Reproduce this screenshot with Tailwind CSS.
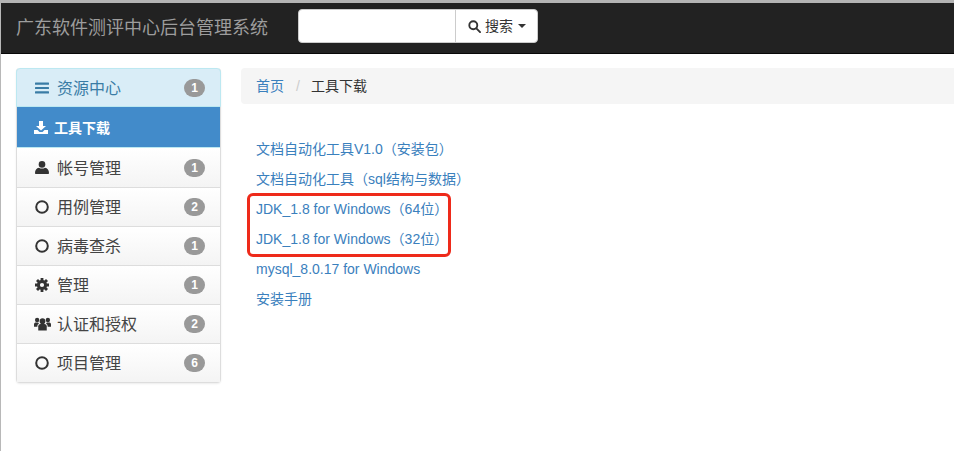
<!DOCTYPE html>
<html lang="zh-CN">

<head>
    <meta charset="UTF-8">
    <title>广东软件测评中心后台管理系统</title>
    <script src="https://cdn.jsdelivr.net/npm/@tailwindcss/browser@4"></script>
</head>

<body class="bg-white h-[451px] w-[954px] overflow-hidden font-['Liberation_Sans','Noto_Sans_CJK_SC',sans-serif] text-[14px] text-[#333]">
    <div class="h-full border-l border-[#b8b8b8]">
        <div class="h-[3px] -ml-px bg-[#b4b4b4]"></div>

        <!-- Navbar -->
        <nav class="h-[51px] bg-[#222] border-b border-[#080808] flex items-center">
            <span class="ml-[15px] text-[18px] leading-none text-[#9d9d9d]">广东软件测评中心后台管理系统</span>
            <div class="ml-[30px] mb-[4px] flex h-[34px] w-[240px] bg-white rounded-[4px] border border-[#ccc]">
                <div class="w-[157px] border-r border-[#ccc]"></div>
                <div class="flex-1 flex items-center pl-[12px] gap-[4px] text-[#333]">
                    <svg class="w-[13px] h-[13px]" viewBox="0 0 14 14" fill="none" stroke="#333" stroke-width="2"><circle cx="5.7" cy="5.7" r="4.3"/><path d="M9 9l4 4" stroke-linecap="round"/></svg>
                    <span>搜索</span>
                    <span class="ml-[1px] w-0 h-0 border-x-4 border-x-transparent border-t-4 border-t-[#333]"></span>
                </div>
            </div>
        </nav>

        <div class="flex pt-[14px] pl-[15px]">
            <!-- Sidebar -->
            <aside class="w-[205px] shrink-0 border-x border-b border-[#ddd] rounded-[4px] shadow-[0_1px_2px_rgba(0,0,0,0.08)]">
                <div class="h-[39px] flex items-center pt-[2px] pl-[18px] pr-[15px] bg-[#d9edf7] border border-[#bce8f1] -mx-px rounded-t-[4px] text-[#3a7ca5] text-[16px]">
                    <svg class="w-[14px] h-[12px] mr-[8px] -mt-[2px]" viewBox="0 0 14 12" fill="#3a7ca5"><rect y="0.5" width="14" height="2.2" rx=".5"/><rect y="4.9" width="14" height="2.2" rx=".5"/><rect y="9.3" width="14" height="2.2" rx=".5"/></svg>
                    <span class="flex-1">资源中心</span>
                    <span class="w-[21px] h-[18px] -mt-[2px] rounded-full bg-[#999] text-white text-[12px] font-bold flex items-center justify-center">1</span>
                </div>
                <div class="h-[41px] flex items-center pt-[2px] pl-[17px] bg-[#428bca] border-b border-[#bce8f1] text-white font-bold text-[14px]">
                    <svg class="w-[14px] h-[13px] mr-[6px] -mt-[2px]" viewBox="0 0 14 13" fill="#fff"><path d="M5 0h4v5h3L7 9.5 2 5h3zM0 9h3.5l2 2h3l2-2H14v4H0z"/></svg>
                    <span>工具下载</span>
                </div>

                <div class="h-[40px] flex items-center pl-[18px] pr-[15px] border-b border-[#ddd] bg-linear-to-b from-white to-[#f4f4f4] text-[16px] text-[#444]">
                    <svg class="w-[14px] h-[13px] mr-[8px]" viewBox="0 0 14 13" fill="#333"><circle cx="7" cy="3.4" r="3.3"/><path d="M1 13c-.6 0-1-.4-1-1 0-3 1.500-5 4-5.300 1.800 1.200 4.200 1.200 6 0 2.500.3 4 2.300 4 5.300 0 .6-.4 1-1 1z"/></svg>
                    <span class="flex-1 pt-[2px]">帐号管理</span>
                    <span class="w-[21px] h-[18px] rounded-full bg-[#999] text-white text-[12px] font-bold flex items-center justify-center">1</span>
                </div>
                <div class="h-[39px] flex items-center pl-[18px] pr-[15px] border-b border-[#ddd] bg-linear-to-b from-white to-[#f4f4f4] text-[16px] text-[#444]">
                    <svg class="w-[14px] h-[14px] mr-[8px]" viewBox="0 0 14 14" fill="none" stroke="#333" stroke-width="2"><circle cx="7" cy="7" r="5.800"/></svg>
                    <span class="flex-1 pt-[2px]">用例管理</span>
                    <span class="w-[21px] h-[18px] rounded-full bg-[#999] text-white text-[12px] font-bold flex items-center justify-center">2</span>
                </div>
                <div class="h-[39px] flex items-center pl-[18px] pr-[15px] border-b border-[#ddd] bg-linear-to-b from-white to-[#f4f4f4] text-[16px] text-[#444]">
                    <svg class="w-[14px] h-[14px] mr-[8px]" viewBox="0 0 14 14" fill="none" stroke="#333" stroke-width="2"><circle cx="7" cy="7" r="5.800"/></svg>
                    <span class="flex-1 pt-[2px]">病毒查杀</span>
                    <span class="w-[21px] h-[18px] rounded-full bg-[#999] text-white text-[12px] font-bold flex items-center justify-center">1</span>
                </div>
                <div class="h-[39px] flex items-center pl-[18px] pr-[15px] border-b border-[#ddd] bg-linear-to-b from-white to-[#f4f4f4] text-[16px] text-[#444]">
                    <svg class="w-[14px] h-[14px] mr-[8px]" viewBox="0 0 14 14"><circle cx="7" cy="7" r="3.600" fill="none" stroke="#333" stroke-width="3"/><path d="M5.600 0h2.800v3H5.600zM5.600 11h2.800v3H5.600zM0 5.600h3v2.800H0zM11 5.600h3v2.800h-3zM1 3l2-2 2 2-2 2zM9 11l2-2 2 2-2 2zM1 11l2-2 2 2-2 2zM9 3l2-2 2 2-2 2z" fill="#333"/></svg>
                    <span class="flex-1 pt-[2px]">管理</span>
                    <span class="w-[21px] h-[18px] rounded-full bg-[#999] text-white text-[12px] font-bold flex items-center justify-center">1</span>
                </div>
                <div class="h-[39px] flex items-center pl-[17px] pr-[15px] border-b border-[#ddd] bg-linear-to-b from-white to-[#f4f4f4] text-[16px] text-[#444]">
                    <svg class="w-[17px] h-[14px] mr-[6px]" viewBox="0 0 18 14" fill="#333"><circle cx="9" cy="4" r="3"/><circle cx="3.300" cy="2.800" r="2.300"/><circle cx="14.700" cy="2.800" r="2.300"/><path d="M4.500 14V9.500C4.500 8 5.500 7 7 7h4c1.500 0 2.500 1 2.500 2.500V14z"/><path d="M0 10V7.500C0 6 1 5.500 2 5.500h2.500c.2.500.5 1 .8 1.300C4 7.300 3.500 8.300 3.500 10zM18 10V7.500c0-1.500-1-2-2-2h-2.500c-.2.500-.5 1-.8 1.300 1.300.5 1.800 1.500 1.800 3.200z"/></svg>
                    <span class="flex-1 pt-[2px]">认证和授权</span>
                    <span class="w-[21px] h-[18px] rounded-full bg-[#999] text-white text-[12px] font-bold flex items-center justify-center">2</span>
                </div>
                <div class="h-[38px] flex items-center pl-[18px] pr-[15px] bg-linear-to-b from-white to-[#f4f4f4] text-[16px] text-[#444]">
                    <svg class="w-[14px] h-[14px] mr-[8px]" viewBox="0 0 14 14" fill="none" stroke="#333" stroke-width="2"><circle cx="7" cy="7" r="5.800"/></svg>
                    <span class="flex-1 pt-[2px]">项目管理</span>
                    <span class="w-[21px] h-[18px] rounded-full bg-[#999] text-white text-[12px] font-bold flex items-center justify-center">6</span>
                </div>
            </aside>

            <!-- Main Content -->
            <main class="ml-[20px] flex-1">
                <div class="h-[36px] bg-[#f5f5f5] rounded-l-[4px] flex items-center pl-[15px]">
                    <a href="#" class="text-[#3a80bd]">首页</a>
                    <span class="ml-[12px] mr-[11px] text-[#ccc]">/</span>
                    <span>工具下载</span>
                </div>
                <ul class="relative mt-[30px] pl-[15px] text-[#3a80bd]">
                    <li class="h-[30px] leading-[30px]"><a href="#">文档自动化工具V1.0（安装包）</a></li>
                    <li class="h-[30px] leading-[30px]"><a href="#">文档自动化工具（sql结构与数据）</a></li>
                    <li class="h-[30px] leading-[30px]"><a href="#">JDK_1.8 for Windows（64位）</a></li>
                    <li class="h-[30px] leading-[30px]"><a href="#">JDK_1.8 for Windows（32位）</a></li>
                    <li class="h-[30px] leading-[30px]"><a href="#">mysql_8.0.17 for Windows</a></li>
                    <li class="h-[30px] leading-[30px]"><a href="#">安装手册</a></li>
                    <!-- red annotation box -->
                    <div class="absolute left-[6px] top-[59px] w-[204px] h-[64px] border-[3px] border-[#ee2a1a] rounded-[6px]"></div>
                </ul>
            </main>
        </div>
    </div>
</body>

</html>
